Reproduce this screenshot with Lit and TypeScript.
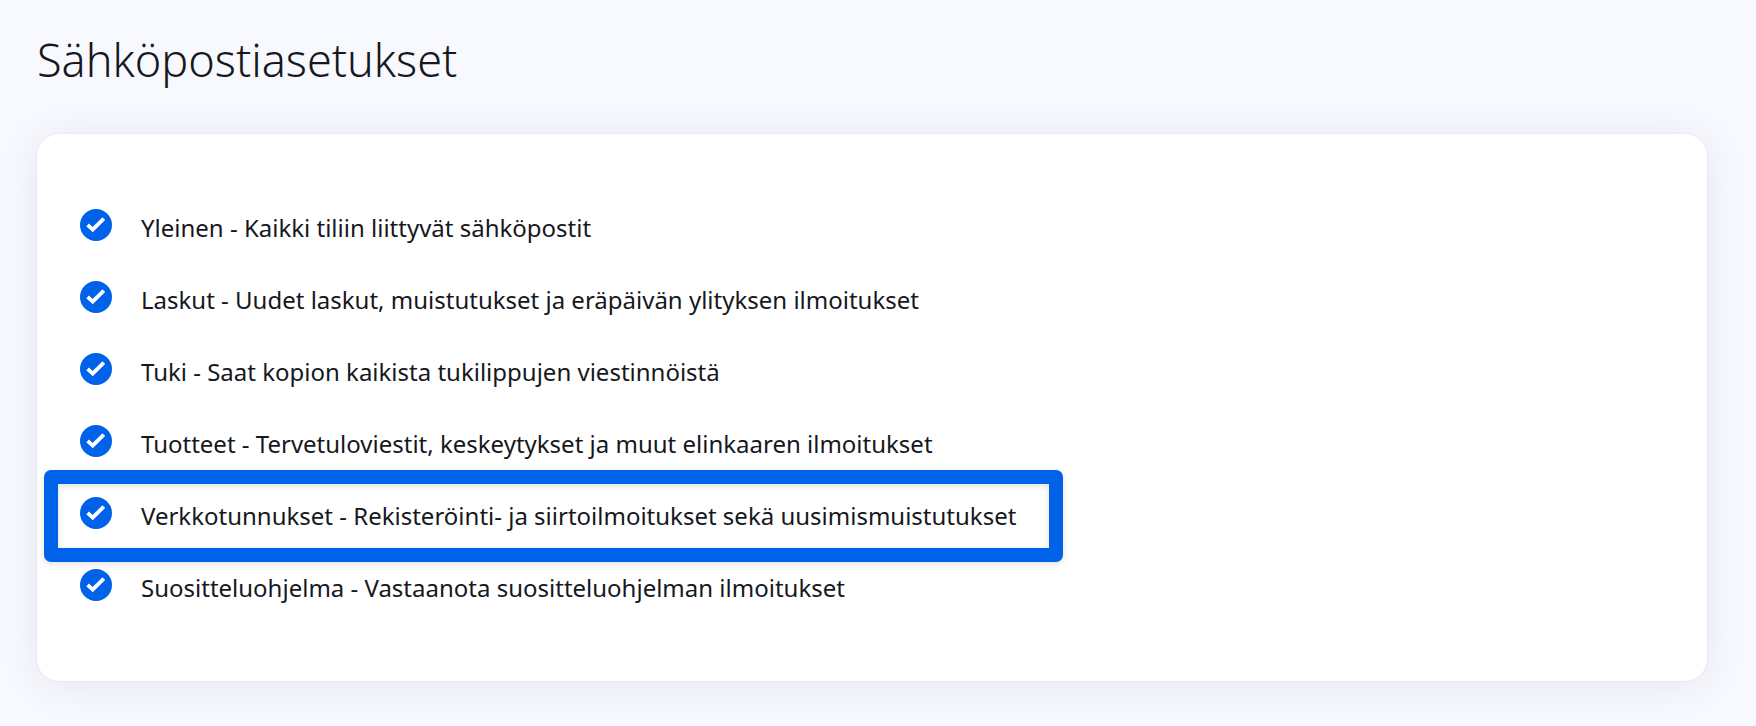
import { LitElement, html, css } from "lit";
import { customElement, state } from "lit/decorators.js";
import { classMap } from "lit/directives/class-map.js";

interface Preference {
  id: string;
  label: string;
  enabled: boolean;
  highlighted?: boolean;
}

@customElement("app-root")
export class AppRoot extends LitElement {
  static styles = css`
    :host {
      display: block;
      box-sizing: border-box;
      min-height: 100vh;
      padding: 24px 49px 40px 37px;
      background: #f8f9fe;
      color: #16181d;
      font-family: "Noto Sans", "Open Sans", sans-serif;
    }
    .title {
      margin: 0 0 38px;
      font-size: 45px;
      line-height: 72px;
      font-weight: 340;
    }
    .card {
      padding: 58px 43px 57px;
      border-radius: 22px;
      background: #fff;
      box-shadow: 0 0 2px rgba(20, 24, 40, 0.1), 0 4px 40px rgba(20, 24, 40, 0.08);
    }
    .list {
      margin: 0;
      padding: 0;
      list-style: none;
    }
    .item {
      position: relative;
      display: flex;
      align-items: center;
      height: 72px;
    }
    .item.highlighted::after {
      content: "";
      position: absolute;
      box-sizing: border-box;
      inset: -10px auto -10px -36px;
      width: 1019px;
      border: 14px solid #0062e9;
      border-radius: 7px;
      filter: drop-shadow(0 2px 3px rgba(0, 0, 0, 0.12));
      pointer-events: none;
    }
    .option {
      display: flex;
      align-items: center;
      gap: 29px;
      font-size: 24px;
      line-height: 32px;
      cursor: pointer;
    }
    .control {
      display: grid;
      flex: none;
      margin-bottom: 6px;
    }
    .control > * {
      grid-area: 1 / 1;
    }
    .box {
      appearance: none;
      box-sizing: border-box;
      width: 32px;
      height: 32px;
      margin: 0;
      border: 2px solid #0062e9;
      border-radius: 50%;
      cursor: pointer;
    }
    .box:checked {
      background: #0062e9;
    }
    .tick {
      width: 32px;
      height: 32px;
      fill: none;
      stroke: #fff;
      stroke-width: 3.8;
      pointer-events: none;
    }
  `;

  @state() private preferences: Preference[] = [
    { id: "general", label: "Yleinen - Kaikki tiliin liittyvät sähköpostit", enabled: true },
    { id: "invoices", label: "Laskut - Uudet laskut, muistutukset ja eräpäivän ylityksen ilmoitukset", enabled: true },
    { id: "support", label: "Tuki - Saat kopion kaikista tukilippujen viestinnöistä", enabled: true },
    { id: "products", label: "Tuotteet - Tervetuloviestit, keskeytykset ja muut elinkaaren ilmoitukset", enabled: true },
    { id: "domains", label: "Verkkotunnukset - Rekisteröinti- ja siirtoilmoitukset sekä uusimismuistutukset", enabled: true, highlighted: true },
    { id: "affiliate", label: "Suositteluohjelma - Vastaanota suositteluohjelman ilmoitukset", enabled: true },
  ];

  private toggle(id: string) {
    this.preferences = this.preferences.map((p) =>
      p.id === id ? { ...p, enabled: !p.enabled } : p
    );
  }

  render() {
    return html`
      <h1 class="title">Sähköpostiasetukset</h1>
      <section class="card">
        <ul class="list">
          ${this.preferences.map(
            (p) => html`
              <li class=${classMap({ item: true, highlighted: !!p.highlighted })}>
                <label class="option" for=${p.id}>
                  <span class="control">
                    <input class="box" type="checkbox" id=${p.id} .checked=${p.enabled} @change=${() => this.toggle(p.id)} />
                    <svg class="tick" viewBox="0 0 32 32" aria-hidden="true">
                      <path d="M7.6 15.8 12.7 20.6 23.8 9.6" />
                    </svg>
                  </span>
                  <span>${p.label}</span>
                </label>
              </li>
            `
          )}
        </ul>
      </section>
    `;
  }
}
